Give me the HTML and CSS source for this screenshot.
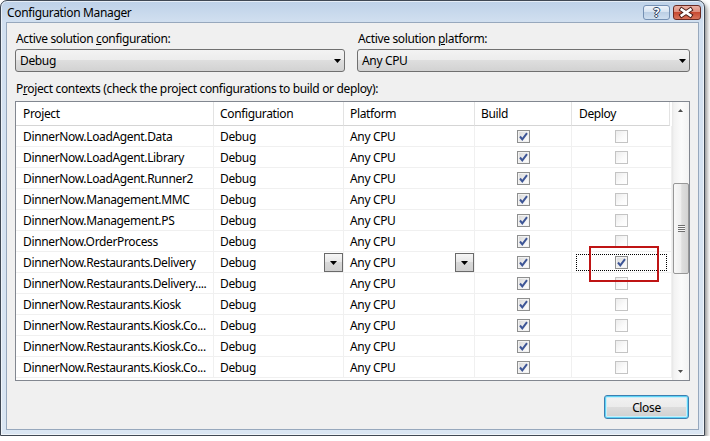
FILE: index.html
```html
<!DOCTYPE html>
<html>
<head>
<meta charset="utf-8">
<link rel="stylesheet" href="styles.css">
</head>
<body>
<div class="window">
  <div class="titlebar">
    <span class="title">Configuration Manager</span>
    <div class="caption-btns">
      <div class="cbtn help">?</div>
      <div class="cbtn xbtn">
        <svg width="28" height="15" viewBox="0 0 28 15"><path d="M9 4.5 L18 10.5 M18 4.5 L9 10.5" stroke="#4a1c16" stroke-width="4.6" stroke-linecap="square" fill="none"/><path d="M9 4.5 L18 10.5 M18 4.5 L9 10.5" stroke="#fff" stroke-width="2.6" stroke-linecap="square" fill="none"/></svg>
      </div>
    </div>
  </div>
  <div class="client">
    <div class="top-row">
      <div class="field">
        <div class="lbl">Active solution <u>c</u>onfiguration:</div>
        <div class="combo"><span class="combo-text">Debug</span><svg class="arrow" width="7" height="4" viewBox="0 0 7 4"><path d="M0 0 H7 L3.5 4 Z" fill="#000"/></svg></div>
      </div>
      <div class="field">
        <div class="lbl">Active solution <u>p</u>latform:</div>
        <div class="combo"><span class="combo-text">Any CPU</span><svg class="arrow" width="7" height="4" viewBox="0 0 7 4"><path d="M0 0 H7 L3.5 4 Z" fill="#000"/></svg></div>
      </div>
    </div>
    <div class="ctx-label">P<u>r</u>oject contexts (check the project configurations to build or deploy):</div>
    <div class="grid">
      <div class="table">
        <div class="row head">
          <div class="cell proj">Project</div>
          <div class="cell">Configuration</div>
          <div class="cell">Platform</div>
          <div class="cell">Build</div>
          <div class="cell deploy-h">Deploy</div>
        </div>
        <div class="row">
          <div class="cell proj">DinnerNow.LoadAgent.Data</div>
          <div class="cell">Debug</div>
          <div class="cell">Any CPU</div>
          <div class="cell ck"><div class="cb"><svg viewBox="0 0 11 11"><path d="M2 5.5 L4.3 8.3 L9 2.2"/></svg></div></div>
          <div class="cell ck"><div class="cb off"></div></div>
        </div>
        <div class="row">
          <div class="cell proj">DinnerNow.LoadAgent.Library</div>
          <div class="cell">Debug</div>
          <div class="cell">Any CPU</div>
          <div class="cell ck"><div class="cb"><svg viewBox="0 0 11 11"><path d="M2 5.5 L4.3 8.3 L9 2.2"/></svg></div></div>
          <div class="cell ck"><div class="cb off"></div></div>
        </div>
        <div class="row">
          <div class="cell proj">DinnerNow.LoadAgent.Runner2</div>
          <div class="cell">Debug</div>
          <div class="cell">Any CPU</div>
          <div class="cell ck"><div class="cb"><svg viewBox="0 0 11 11"><path d="M2 5.5 L4.3 8.3 L9 2.2"/></svg></div></div>
          <div class="cell ck"><div class="cb off"></div></div>
        </div>
        <div class="row">
          <div class="cell proj">DinnerNow.Management.MMC</div>
          <div class="cell">Debug</div>
          <div class="cell">Any CPU</div>
          <div class="cell ck"><div class="cb"><svg viewBox="0 0 11 11"><path d="M2 5.5 L4.3 8.3 L9 2.2"/></svg></div></div>
          <div class="cell ck"><div class="cb off"></div></div>
        </div>
        <div class="row">
          <div class="cell proj">DinnerNow.Management.PS</div>
          <div class="cell">Debug</div>
          <div class="cell">Any CPU</div>
          <div class="cell ck"><div class="cb"><svg viewBox="0 0 11 11"><path d="M2 5.5 L4.3 8.3 L9 2.2"/></svg></div></div>
          <div class="cell ck"><div class="cb off"></div></div>
        </div>
        <div class="row">
          <div class="cell proj">DinnerNow.OrderProcess</div>
          <div class="cell">Debug</div>
          <div class="cell">Any CPU</div>
          <div class="cell ck"><div class="cb"><svg viewBox="0 0 11 11"><path d="M2 5.5 L4.3 8.3 L9 2.2"/></svg></div></div>
          <div class="cell ck"><div class="cb off"></div></div>
        </div>
        <div class="row sel">
          <div class="cell proj">DinnerNow.Restaurants.Delivery</div>
          <div class="cell drop"><span>Debug</span><div class="ddbtn"><svg width="7" height="4" viewBox="0 0 7 4"><path d="M0 0 H7 L3.5 4 Z" fill="#000"/></svg></div></div>
          <div class="cell drop"><span>Any CPU</span><div class="ddbtn"><svg width="7" height="4" viewBox="0 0 7 4"><path d="M0 0 H7 L3.5 4 Z" fill="#000"/></svg></div></div>
          <div class="cell ck"><div class="cb"><svg viewBox="0 0 11 11"><path d="M2 5.5 L4.3 8.3 L9 2.2"/></svg></div></div>
          <div class="cell ck focus-cell">
            <div class="focus"><div class="cb"><svg viewBox="0 0 11 11"><path d="M2 5.5 L4.3 8.3 L9 2.2"/></svg></div></div>
            <div class="annot"></div>
          </div>
        </div>
        <div class="row">
          <div class="cell proj">DinnerNow.Restaurants.Delivery....</div>
          <div class="cell">Debug</div>
          <div class="cell">Any CPU</div>
          <div class="cell ck"><div class="cb"><svg viewBox="0 0 11 11"><path d="M2 5.5 L4.3 8.3 L9 2.2"/></svg></div></div>
          <div class="cell ck"><div class="cb off"></div></div>
        </div>
        <div class="row">
          <div class="cell proj">DinnerNow.Restaurants.Kiosk</div>
          <div class="cell">Debug</div>
          <div class="cell">Any CPU</div>
          <div class="cell ck"><div class="cb"><svg viewBox="0 0 11 11"><path d="M2 5.5 L4.3 8.3 L9 2.2"/></svg></div></div>
          <div class="cell ck"><div class="cb off"></div></div>
        </div>
        <div class="row">
          <div class="cell proj">DinnerNow.Restaurants.Kiosk.Co...</div>
          <div class="cell">Debug</div>
          <div class="cell">Any CPU</div>
          <div class="cell ck"><div class="cb"><svg viewBox="0 0 11 11"><path d="M2 5.5 L4.3 8.3 L9 2.2"/></svg></div></div>
          <div class="cell ck"><div class="cb off"></div></div>
        </div>
        <div class="row">
          <div class="cell proj">DinnerNow.Restaurants.Kiosk.Co...</div>
          <div class="cell">Debug</div>
          <div class="cell">Any CPU</div>
          <div class="cell ck"><div class="cb"><svg viewBox="0 0 11 11"><path d="M2 5.5 L4.3 8.3 L9 2.2"/></svg></div></div>
          <div class="cell ck"><div class="cb off"></div></div>
        </div>
        <div class="row">
          <div class="cell proj">DinnerNow.Restaurants.Kiosk.Co...</div>
          <div class="cell">Debug</div>
          <div class="cell">Any CPU</div>
          <div class="cell ck"><div class="cb"><svg viewBox="0 0 11 11"><path d="M2 5.5 L4.3 8.3 L9 2.2"/></svg></div></div>
          <div class="cell ck"><div class="cb off"></div></div>
        </div>
      </div>
      <div class="scroll">
        <div class="sarrow"><svg width="5" height="3" viewBox="0 0 5 3"><path d="M0 3 H5 L2.5 0 Z" fill="#4d4d4d"/></svg></div>
        <div class="track">
          <div class="thumb"><div class="grip"></div></div>
        </div>
        <div class="sarrow"><svg width="5" height="3" viewBox="0 0 5 3"><path d="M0 0 H5 L2.5 3 Z" fill="#4d4d4d"/></svg></div>
      </div>
    </div>
    <div class="footer">
      <button class="btn">Close</button>
    </div>
  </div>
</div>
</body>
</html>
```

FILE: styles.css
```css
html, body {
  margin: 0;
  background: #ffffff;
}
body {
  font-family: "Segoe UI", "Noto Sans", sans-serif;
  font-size: 12px;
  letter-spacing: -0.35px;
  color: #000;
}
.window {
  box-sizing: border-box;
  width: 705px;
  height: 436px;
  border: 1px solid #3f4854;
  border-radius: 7px 7px 0 0;
  background: linear-gradient(#bdd1e8, #d2e0f0 22px, #dae6f3);
  box-shadow: 2px 3px 4px rgba(0, 0, 0, 0.45), inset 0 0 0 1px rgba(255, 255, 255, 0.6);
  display: flex;
  flex-direction: column;
  padding: 0 5px 5px 5px;
}
.titlebar {
  height: 21px;
  display: flex;
  justify-content: space-between;
  align-items: flex-start;
}
.title {
  padding: 4px 0 0 1px;
  line-height: 16px;
}
.caption-btns {
  display: flex;
  gap: 3px;
  margin-top: 4px;
  margin-right: -2px;
}
.cbtn {
  box-sizing: border-box;
  height: 15px;
  border-radius: 3px;
}
.help {
  width: 27px;
  border: 1px solid #7590b3;
  background: linear-gradient(#eef3fa, #d4e1f0 50%, #bccfe5 50%, #cfdff0);
  color: #fff;
  font-weight: bold;
  font-size: 12px;
  line-height: 13px;
  letter-spacing: 0;
  text-align: center;
  text-shadow: 1px 0 0 #2c3f5e, -1px 0 0 #2c3f5e, 0 1px 0 #2c3f5e, 0 -1px 0 #2c3f5e;
}
.xbtn {
  width: 28px;
  border: 1px solid #6b2a22;
  background: linear-gradient(#eab0a3, #dc8a79 50%, #c84a32 50%, #d8745b);
  display: flex;
}
.xbtn svg {
  margin-left: -1px;
  margin-top: -1px;
}
.client {
  flex: 1;
  border: 1px solid #97a8bd;
  background: #f0f0f0;
  padding: 8px 8px 10px 8px;
  display: flex;
  flex-direction: column;
}
.top-row {
  display: grid;
  grid-template-columns: 330px 333px;
  column-gap: 12px;
}
.lbl {
  line-height: 16px;
  padding-left: 1px;
  margin-bottom: 2px;
}
.combo {
  box-sizing: border-box;
  height: 23px;
  border: 1px solid #707070;
  border-radius: 3px;
  background: linear-gradient(#f3f3f3 0%, #ececec 50%, #dedede 50%, #d2d2d2 100%);
  display: flex;
  align-items: center;
  padding: 0 3px 0 4px;
}
.combo-text {
  flex: 1;
}
.ctx-label {
  margin-top: 9px;
  line-height: 16px;
  padding-left: 1px;
}
.grid {
  margin-top: 4px;
  height: 280px;
  box-sizing: border-box;
  border: 1px solid #828790;
  background: #fff;
  display: flex;
}
.table {
  width: 656px;
  overflow: hidden;
}
.row {
  display: grid;
  grid-template-columns: 198px 130px 131px 97px 100px;
  height: 21px;
}
.cell {
  box-sizing: border-box;
  border-right: 1px solid #f0f0f0;
  border-bottom: 1px solid #f0f0f0;
  padding-left: 6px;
  white-space: nowrap;
  overflow: hidden;
  display: flex;
  align-items: center;
}
.cell.proj {
  padding-left: 7px;
}
.head {
  height: 24px;
}
.head .cell {
  border-right-color: #e3e3e3;
  border-bottom-color: #d5d5d5;
}
.head .deploy-h {
  padding-left: 7px;
  border-right: 1px solid #e3e3e3;
  margin-right: 2px;
}
.cell.ck {
  padding-left: 0;
  justify-content: center;
}
.cell.drop {
  justify-content: space-between;
}
.ddbtn {
  box-sizing: border-box;
  width: 19px;
  height: 19px;
  border: 1px solid #6a6a6a;
  background: linear-gradient(#f6f6f6, #e6e6e6 50%, #d8d8d8 50%, #d0d0d0);
  display: flex;
  align-items: center;
  justify-content: center;
  margin-top: 1px;
}
.cb {
  box-sizing: border-box;
  width: 13px;
  height: 13px;
  border: 1px solid #8e8f8f;
  background: linear-gradient(135deg, #d6d6d6, #f6f6f6 70%, #ffffff);
  box-shadow: inset 0 0 0 1px #f2f2f2;
  display: flex;
}
.cb.off {
  border-color: #c4c4c4;
  background: linear-gradient(135deg, #ececec, #fbfbfb 60%, #ffffff);
  box-shadow: none;
}
.cb svg {
  width: 11px;
  height: 11px;
}
.cb path {
  fill: none;
  stroke: #3d5596;
  stroke-width: 2;
}
.focus-cell {
  position: relative;
  overflow: visible;
  align-items: stretch;
}
.focus {
  flex: 1;
  margin: 2px 4px 1px 4px;
  border: 1px dotted #000;
  display: flex;
  align-items: center;
  justify-content: center;
}
.annot {
  position: absolute;
  left: 17px;
  top: -6px;
  width: 70px;
  height: 36px;
  box-sizing: border-box;
  border: 2px solid #bf1414;
  z-index: 2;
}
.scroll {
  width: 17px;
  display: flex;
  flex-direction: column;
  background: linear-gradient(90deg, #e6e6e6 0, #f2f2f2 2px, #fbfbfb 55%, #f3f3f3 100%);
}
.sarrow {
  height: 17px;
  display: flex;
  align-items: center;
  justify-content: center;
}
.track {
  flex: 1;
}
.thumb {
  box-sizing: border-box;
  width: 16px;
  height: 91px;
  margin: 64px 0 0 1px;
  border: 1px solid #979797;
  border-radius: 2px;
  background: linear-gradient(90deg, #f8f8f8 0%, #eeeeee 50%, #dedede 55%, #d3d3d3 100%);
  display: flex;
  align-items: center;
  justify-content: center;
}
.grip {
  width: 7px;
  height: 7px;
  background: repeating-linear-gradient(#6e6e6e 0, #6e6e6e 1px, #f6f6f6 1px, #f6f6f6 2px);
}
.footer {
  margin-top: 14px;
  display: flex;
  justify-content: flex-end;
}
.btn {
  box-sizing: border-box;
  width: 85px;
  height: 24px;
  margin-right: 1px;
  border: 1px solid #3c7fb1;
  border-radius: 3px;
  background: linear-gradient(#f2f2f2 0%, #ebebeb 50%, #dddddd 50%, #cfcfcf 100%);
  box-shadow: inset 0 0 0 1px #5fd3f5, inset 0 0 0 2px #c9eefa;
  font-family: "Segoe UI", "Noto Sans", sans-serif;
  font-size: 12px;
  letter-spacing: -0.35px;
  color: #000;
  padding: 0;
}
```
